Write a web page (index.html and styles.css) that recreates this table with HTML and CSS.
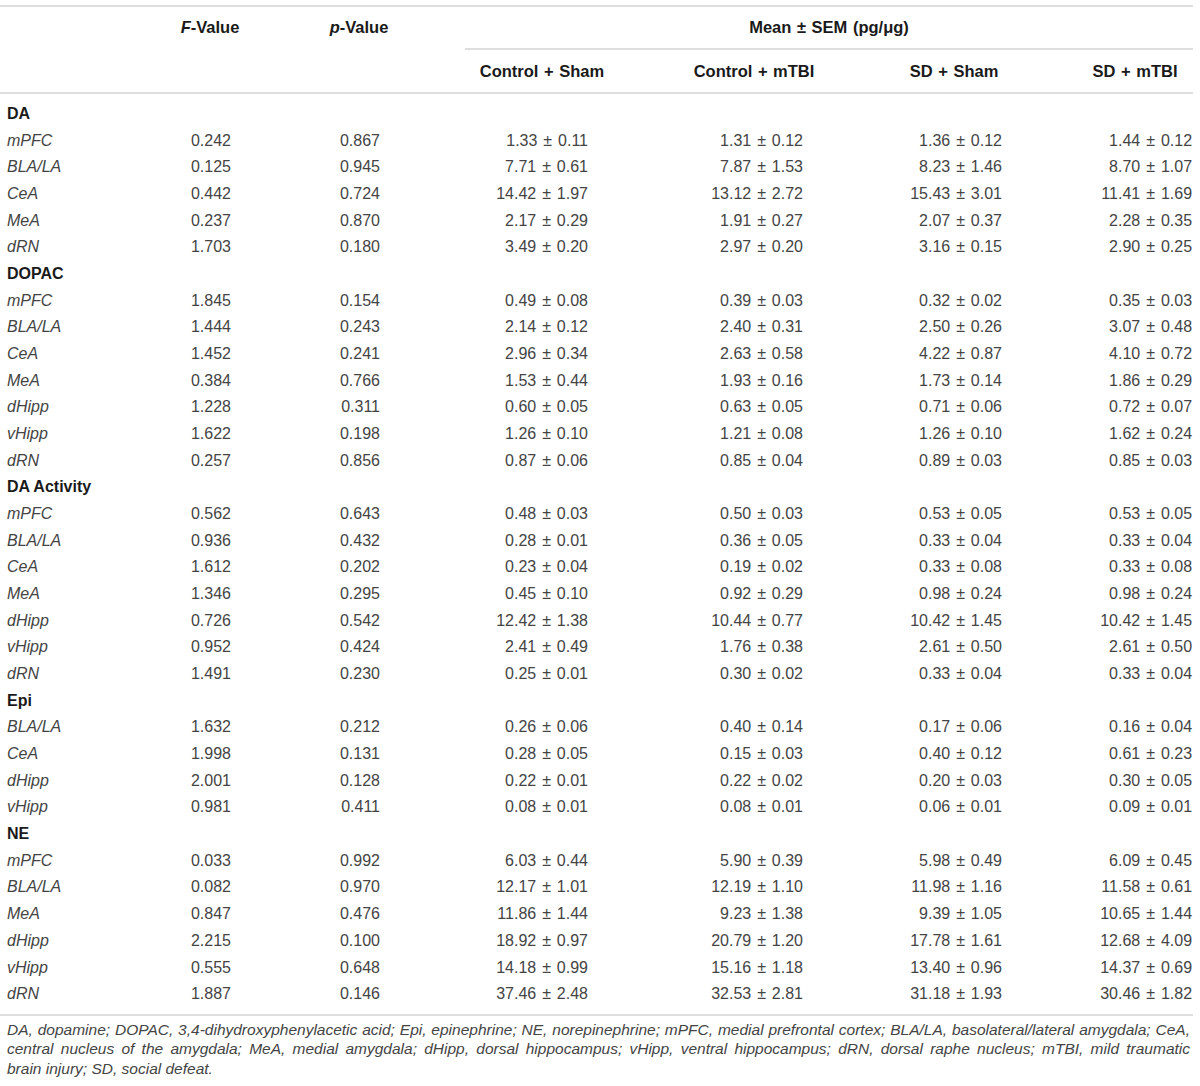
FILE: index.html
```html
<!DOCTYPE html>
<html lang="en">
<head>
    <meta charset="UTF-8">
    <meta name="viewport" content="width=device-width, initial-scale=1.0">
    <title>Monoamine levels by region</title>
    <link rel="stylesheet" href="styles.css">
</head>
<body>
    <div class="wrap">
        <table class="data-table">
            <colgroup>
                <col class="c-label">
                <col class="c-f">
                <col class="c-p">
                <col class="c-cs">
                <col class="c-cm">
                <col class="c-ss">
                <col class="c-sm">
            </colgroup>
            <thead>
                <tr>
                    <th rowspan="2" class="head-stack"></th>
                    <th rowspan="2" class="head-stack"><i>F</i>-Value</th>
                    <th rowspan="2" class="head-stack"><i>p</i>-Value</th>
                    <th colspan="4" class="group-head"><div class="group-title">Mean &plusmn; SEM (pg/&mu;g)</div></th>
                </tr>
                <tr>
                    <th class="sub-head">Control + Sham</th>
                    <th class="sub-head">Control + mTBI</th>
                    <th class="sub-head">SD + Sham</th>
                    <th class="sub-head">SD + mTBI</th>
                </tr>
            </thead>
            <tbody>
                <tr class="first"><td colspan="7" class="group">DA</td></tr>
                <tr><td class="region">mPFC</td><td class="f">0.242</td><td class="p">0.867</td><td class="cs">1.33 &plusmn; 0.11</td><td class="cm">1.31 &plusmn; 0.12</td><td class="ss">1.36 &plusmn; 0.12</td><td class="sm">1.44 &plusmn; 0.12</td></tr>
                <tr><td class="region">BLA/LA</td><td class="f">0.125</td><td class="p">0.945</td><td class="cs">7.71 &plusmn; 0.61</td><td class="cm">7.87 &plusmn; 1.53</td><td class="ss">8.23 &plusmn; 1.46</td><td class="sm">8.70 &plusmn; 1.07</td></tr>
                <tr><td class="region">CeA</td><td class="f">0.442</td><td class="p">0.724</td><td class="cs">14.42 &plusmn; 1.97</td><td class="cm">13.12 &plusmn; 2.72</td><td class="ss">15.43 &plusmn; 3.01</td><td class="sm">11.41 &plusmn; 1.69</td></tr>
                <tr><td class="region">MeA</td><td class="f">0.237</td><td class="p">0.870</td><td class="cs">2.17 &plusmn; 0.29</td><td class="cm">1.91 &plusmn; 0.27</td><td class="ss">2.07 &plusmn; 0.37</td><td class="sm">2.28 &plusmn; 0.35</td></tr>
                <tr><td class="region">dRN</td><td class="f">1.703</td><td class="p">0.180</td><td class="cs">3.49 &plusmn; 0.20</td><td class="cm">2.97 &plusmn; 0.20</td><td class="ss">3.16 &plusmn; 0.15</td><td class="sm">2.90 &plusmn; 0.25</td></tr>

                <tr><td colspan="7" class="group">DOPAC</td></tr>
                <tr><td class="region">mPFC</td><td class="f">1.845</td><td class="p">0.154</td><td class="cs">0.49 &plusmn; 0.08</td><td class="cm">0.39 &plusmn; 0.03</td><td class="ss">0.32 &plusmn; 0.02</td><td class="sm">0.35 &plusmn; 0.03</td></tr>
                <tr><td class="region">BLA/LA</td><td class="f">1.444</td><td class="p">0.243</td><td class="cs">2.14 &plusmn; 0.12</td><td class="cm">2.40 &plusmn; 0.31</td><td class="ss">2.50 &plusmn; 0.26</td><td class="sm">3.07 &plusmn; 0.48</td></tr>
                <tr><td class="region">CeA</td><td class="f">1.452</td><td class="p">0.241</td><td class="cs">2.96 &plusmn; 0.34</td><td class="cm">2.63 &plusmn; 0.58</td><td class="ss">4.22 &plusmn; 0.87</td><td class="sm">4.10 &plusmn; 0.72</td></tr>
                <tr><td class="region">MeA</td><td class="f">0.384</td><td class="p">0.766</td><td class="cs">1.53 &plusmn; 0.44</td><td class="cm">1.93 &plusmn; 0.16</td><td class="ss">1.73 &plusmn; 0.14</td><td class="sm">1.86 &plusmn; 0.29</td></tr>
                <tr><td class="region">dHipp</td><td class="f">1.228</td><td class="p">0.311</td><td class="cs">0.60 &plusmn; 0.05</td><td class="cm">0.63 &plusmn; 0.05</td><td class="ss">0.71 &plusmn; 0.06</td><td class="sm">0.72 &plusmn; 0.07</td></tr>
                <tr><td class="region">vHipp</td><td class="f">1.622</td><td class="p">0.198</td><td class="cs">1.26 &plusmn; 0.10</td><td class="cm">1.21 &plusmn; 0.08</td><td class="ss">1.26 &plusmn; 0.10</td><td class="sm">1.62 &plusmn; 0.24</td></tr>
                <tr><td class="region">dRN</td><td class="f">0.257</td><td class="p">0.856</td><td class="cs">0.87 &plusmn; 0.06</td><td class="cm">0.85 &plusmn; 0.04</td><td class="ss">0.89 &plusmn; 0.03</td><td class="sm">0.85 &plusmn; 0.03</td></tr>

                <tr><td colspan="7" class="group">DA Activity</td></tr>
                <tr><td class="region">mPFC</td><td class="f">0.562</td><td class="p">0.643</td><td class="cs">0.48 &plusmn; 0.03</td><td class="cm">0.50 &plusmn; 0.03</td><td class="ss">0.53 &plusmn; 0.05</td><td class="sm">0.53 &plusmn; 0.05</td></tr>
                <tr><td class="region">BLA/LA</td><td class="f">0.936</td><td class="p">0.432</td><td class="cs">0.28 &plusmn; 0.01</td><td class="cm">0.36 &plusmn; 0.05</td><td class="ss">0.33 &plusmn; 0.04</td><td class="sm">0.33 &plusmn; 0.04</td></tr>
                <tr><td class="region">CeA</td><td class="f">1.612</td><td class="p">0.202</td><td class="cs">0.23 &plusmn; 0.04</td><td class="cm">0.19 &plusmn; 0.02</td><td class="ss">0.33 &plusmn; 0.08</td><td class="sm">0.33 &plusmn; 0.08</td></tr>
                <tr><td class="region">MeA</td><td class="f">1.346</td><td class="p">0.295</td><td class="cs">0.45 &plusmn; 0.10</td><td class="cm">0.92 &plusmn; 0.29</td><td class="ss">0.98 &plusmn; 0.24</td><td class="sm">0.98 &plusmn; 0.24</td></tr>
                <tr><td class="region">dHipp</td><td class="f">0.726</td><td class="p">0.542</td><td class="cs">12.42 &plusmn; 1.38</td><td class="cm">10.44 &plusmn; 0.77</td><td class="ss">10.42 &plusmn; 1.45</td><td class="sm">10.42 &plusmn; 1.45</td></tr>
                <tr><td class="region">vHipp</td><td class="f">0.952</td><td class="p">0.424</td><td class="cs">2.41 &plusmn; 0.49</td><td class="cm">1.76 &plusmn; 0.38</td><td class="ss">2.61 &plusmn; 0.50</td><td class="sm">2.61 &plusmn; 0.50</td></tr>
                <tr><td class="region">dRN</td><td class="f">1.491</td><td class="p">0.230</td><td class="cs">0.25 &plusmn; 0.01</td><td class="cm">0.30 &plusmn; 0.02</td><td class="ss">0.33 &plusmn; 0.04</td><td class="sm">0.33 &plusmn; 0.04</td></tr>

                <tr><td colspan="7" class="group">Epi</td></tr>
                <tr><td class="region">BLA/LA</td><td class="f">1.632</td><td class="p">0.212</td><td class="cs">0.26 &plusmn; 0.06</td><td class="cm">0.40 &plusmn; 0.14</td><td class="ss">0.17 &plusmn; 0.06</td><td class="sm">0.16 &plusmn; 0.04</td></tr>
                <tr><td class="region">CeA</td><td class="f">1.998</td><td class="p">0.131</td><td class="cs">0.28 &plusmn; 0.05</td><td class="cm">0.15 &plusmn; 0.03</td><td class="ss">0.40 &plusmn; 0.12</td><td class="sm">0.61 &plusmn; 0.23</td></tr>
                <tr><td class="region">dHipp</td><td class="f">2.001</td><td class="p">0.128</td><td class="cs">0.22 &plusmn; 0.01</td><td class="cm">0.22 &plusmn; 0.02</td><td class="ss">0.20 &plusmn; 0.03</td><td class="sm">0.30 &plusmn; 0.05</td></tr>
                <tr><td class="region">vHipp</td><td class="f">0.981</td><td class="p">0.411</td><td class="cs">0.08 &plusmn; 0.01</td><td class="cm">0.08 &plusmn; 0.01</td><td class="ss">0.06 &plusmn; 0.01</td><td class="sm">0.09 &plusmn; 0.01</td></tr>

                <tr><td colspan="7" class="group">NE</td></tr>
                <tr><td class="region">mPFC</td><td class="f">0.033</td><td class="p">0.992</td><td class="cs">6.03 &plusmn; 0.44</td><td class="cm">5.90 &plusmn; 0.39</td><td class="ss">5.98 &plusmn; 0.49</td><td class="sm">6.09 &plusmn; 0.45</td></tr>
                <tr><td class="region">BLA/LA</td><td class="f">0.082</td><td class="p">0.970</td><td class="cs">12.17 &plusmn; 1.01</td><td class="cm">12.19 &plusmn; 1.10</td><td class="ss">11.98 &plusmn; 1.16</td><td class="sm">11.58 &plusmn; 0.61</td></tr>
                <tr><td class="region">MeA</td><td class="f">0.847</td><td class="p">0.476</td><td class="cs">11.86 &plusmn; 1.44</td><td class="cm">9.23 &plusmn; 1.38</td><td class="ss">9.39 &plusmn; 1.05</td><td class="sm">10.65 &plusmn; 1.44</td></tr>
                <tr><td class="region">dHipp</td><td class="f">2.215</td><td class="p">0.100</td><td class="cs">18.92 &plusmn; 0.97</td><td class="cm">20.79 &plusmn; 1.20</td><td class="ss">17.78 &plusmn; 1.61</td><td class="sm">12.68 &plusmn; 4.09</td></tr>
                <tr><td class="region">vHipp</td><td class="f">0.555</td><td class="p">0.648</td><td class="cs">14.18 &plusmn; 0.99</td><td class="cm">15.16 &plusmn; 1.18</td><td class="ss">13.40 &plusmn; 0.96</td><td class="sm">14.37 &plusmn; 0.69</td></tr>
                <tr class="last"><td class="region">dRN</td><td class="f">1.887</td><td class="p">0.146</td><td class="cs">37.46 &plusmn; 2.48</td><td class="cm">32.53 &plusmn; 2.81</td><td class="ss">31.18 &plusmn; 1.93</td><td class="sm">30.46 &plusmn; 1.82</td></tr>
            </tbody>
        </table>

        <p class="notes">
            <span class="line">DA, dopamine; DOPAC, 3,4-dihydroxyphenylacetic acid; Epi, epinephrine; NE, norepinephrine; mPFC, medial prefrontal cortex; BLA/LA, basolateral/lateral amygdala; CeA,</span>
            <span class="line">central nucleus of the amygdala; MeA, medial amygdala; dHipp, dorsal hippocampus; vHipp, ventral hippocampus; dRN, dorsal raphe nucleus; mTBI, mild traumatic</span>
            <span class="line end">brain injury; SD, social defeat.</span>
        </p>
    </div>
</body>
</html>
```

FILE: styles.css
```css
body {
    margin: 0;
    background-color: #fff;
    font-family: 'Liberation Sans', Arial, Helvetica, sans-serif;
    color: #444;
}
.wrap {
    width: 1193px;
    padding-top: 5px;
}
.data-table {
    width: 1193px;
    table-layout: fixed;
    border-collapse: separate;
    border-spacing: 0;
    border-top: 2px solid #dedede;
    font-size: 16px;
}
.c-label { width: 109px; }
.c-f { width: 202px; }
.c-p { width: 96px; }
.c-cs { width: 270px; }
.c-cm { width: 154px; }
.c-ss { width: 246px; }
.c-sm { width: 116px; }

th {
    padding: 0;
    font-size: 16.5px;
    font-weight: bold;
    color: #1a1a1a;
    text-align: center;
    white-space: nowrap;
    word-spacing: 1px;
}
.head-stack {
    vertical-align: top;
    line-height: 41px;
    border-bottom: 2px solid #dedede;
}
.group-head {
    vertical-align: top;
}
.group-title {
    margin-left: 58px;
    line-height: 41px;
    border-bottom: 2px solid #dedede;
}
.sub-head {
    line-height: 42px;
    border-bottom: 2px solid #dedede;
}

td {
    padding: 0;
    height: 26.67px;
    line-height: 26.67px;
    white-space: nowrap;
    text-align: right;
    word-spacing: 1.5px;
}
tr.first td {
    padding-top: 7px;
}
tr.last td {
    padding-bottom: 6px;
    border-bottom: 2px solid #dedede;
}
td.group {
    text-align: left;
    padding-left: 7px;
    font-weight: bold;
    color: #1a1a1a;
    word-spacing: 0;
}
td.region {
    text-align: left;
    padding-left: 7px;
    font-style: italic;
}
td.f { padding-right: 80px; }
td.p { padding-right: 27px; }
td.cs { padding-right: 89px; }
td.cm { padding-right: 28px; }
td.ss { padding-right: 75px; }
td.sm { padding-right: 1px; }

.notes {
    margin: 4px 0 0;
    padding: 0 3px 0 7px;
    font-size: 15.5px;
    line-height: 19.5px;
    font-style: italic;
    color: #444;
}
.notes .line {
    display: block;
    white-space: nowrap;
    text-align: justify;
    text-align-last: justify;
}
.notes .line.end {
    text-align-last: left;
}
```
